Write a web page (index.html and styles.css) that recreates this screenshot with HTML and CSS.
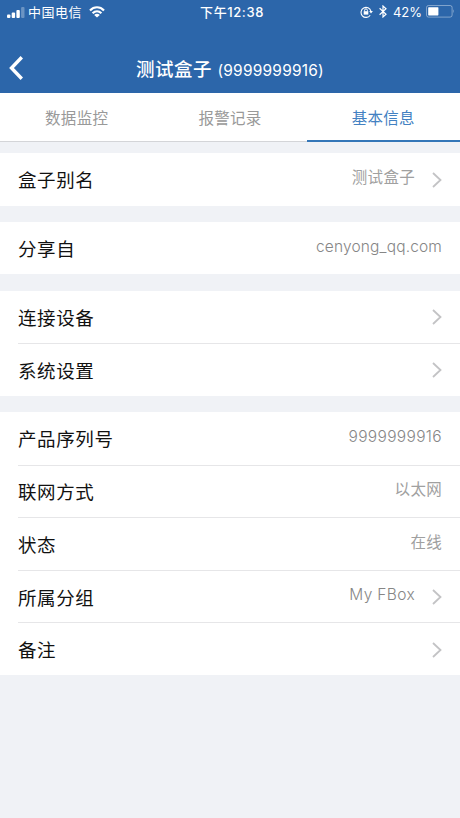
FILE: index.html
```
<!DOCTYPE html>
<html lang="zh-CN">
<head>
<meta charset="utf-8">
<title>测试盒子</title>
<link rel="stylesheet" href="styles.css">
</head>
<body>
<header class="header">
  <div class="status">
    <div class="status-left">
      <svg class="signal" width="18" height="12" viewBox="0 0 18 12" fill="#fff"><rect x="0" y="7.4" width="3.4" height="3.6" rx="1"/><rect x="4.7" y="5.4" width="3.4" height="5.6" rx="1"/><rect x="9.4" y="3" width="3.4" height="8" rx="1"/><rect x="14.1" y="0" width="3.4" height="11" rx="1" opacity=".3"/></svg>
      <span class="carrier">中国电信</span>
      <svg class="wifi" width="16" height="12" viewBox="0 0 16 12" fill="none" stroke="#fff" stroke-width="2.2"><path d="M1 4.4C5 .2 11 .2 15 4.4M3.6 7.3c2.6-2.6 6.2-2.6 8.8 0"/><path d="M8 11.6 5.2 8.9c1.6-1.4 4-1.4 5.6 0Z" fill="#fff" stroke="none"/></svg>
    </div>
    <span class="clock">下午12:38</span>
    <div class="status-right">
      <svg class="lock" width="13" height="12" viewBox="0 0 13 12" fill="none" stroke="#fff"><path d="M10.2 9.2A5 5 0 1 1 10.9 5.2" stroke-width="1.1"/><path d="M9.2 5h3.7L11 7.5Z" fill="#fff" stroke="none"/><rect x="3.7" y="5.2" width="4.6" height="3.4" fill="#fff" stroke="none"/><path d="M4.6 5.5V4.3a1.4 1.4 0 0 1 2.8 0v1.2"/></svg>
      <svg class="bluetooth" width="8" height="13" viewBox="0 0 8 13" fill="none" stroke="#fff" stroke-width="1.2"><path d="m.6 3.3 6.4 6-3 2.7V1l3 2.7-6.4 6"/></svg>
      <span class="percent">42%</span>
      <svg class="battery" width="29" height="13" viewBox="0 0 29 13"><rect x=".5" y=".5" width="25.6" height="11.6" rx="2" fill="none" stroke="#fff" opacity=".4"/><rect x="2.2" y="2.2" width="10.2" height="8.2" rx=".6" fill="#fff"/><path d="M27.4 4.3q1.5 2 0 4Z" fill="#fff" opacity=".5"/></svg>
    </div>
  </div>
  <div class="navbar">
    <svg class="back" width="14" height="24" viewBox="0 0 14 24" fill="none" stroke="#fff" stroke-width="3.4"><path d="M12.8 1.3 2.5 12l10.3 10.7"/></svg>
    <h1 class="title">测试盒子 <span class="serial">(9999999916)</span></h1>
  </div>
</header>
<nav class="tabs">
  <a class="tab">数据监控</a>
  <a class="tab">报警记录</a>
  <a class="tab active">基本信息</a>
</nav>
<main class="groups">
  <section class="group">
    <div class="row"><span class="label">盒子别名</span><span class="value">测试盒子</span><svg class="chevron" viewBox="0 0 10 16"><path d="m1 1 7.5 7L1 15"/></svg></div>
  </section>
  <section class="group">
    <div class="row"><span class="label">分享自</span><span class="value email">cenyong_qq.com</span></div>
  </section>
  <section class="group">
    <div class="row"><span class="label">连接设备</span><svg class="chevron" viewBox="0 0 10 16"><path d="m1 1 7.5 7L1 15"/></svg></div>
    <div class="row"><span class="label">系统设置</span><svg class="chevron" viewBox="0 0 10 16"><path d="m1 1 7.5 7L1 15"/></svg></div>
  </section>
  <section class="group">
    <div class="row"><span class="label">产品序列号</span><span class="value number">9999999916</span></div>
    <div class="row"><span class="label">联网方式</span><span class="value">以太网</span></div>
    <div class="row"><span class="label">状态</span><span class="value">在线</span></div>
    <div class="row"><span class="label">所属分组</span><span class="value number">My FBox</span><svg class="chevron" viewBox="0 0 10 16"><path d="m1 1 7.5 7L1 15"/></svg></div>
    <div class="row"><span class="label">备注</span><svg class="chevron" viewBox="0 0 10 16"><path d="m1 1 7.5 7L1 15"/></svg></div>
  </section>
</main>
</body>
</html>
```
FILE: styles.css
```
* { box-sizing: border-box; }
body {
  margin: 0;
  min-height: 818px;
  background: #f0f2f6;
  color: #111;
  font-family: Inter, "Noto Sans CJK SC", sans-serif;
}
svg { display: block; flex: none; }
.header {
  height: 93.4px;
  background: #2c66aa;
  color: #fff;
}
.status {
  display: grid;
  grid-template-columns: 1fr auto 1fr;
  align-items: center;
  height: 23px;
  padding: 0 6px 0 7px;
  line-height: 24px;
}
.status-left, .status-right { display: flex; align-items: center; }
.status-right { justify-content: flex-end; }
.signal { margin-top: 1px; }
.carrier { margin-left: 3px; font-size: 13px; letter-spacing: .5px; }
.wifi { margin-left: 7px; }
.clock { padding-left: 3px; font-size: 13px; font-weight: 500; letter-spacing: .6px; }
.percent { margin: 0 4px 0 6px; font-size: 13px; letter-spacing: 0; }
.lock { margin-top: -1px; }
.bluetooth { margin-left: 6px; }
.percent, .battery, .bluetooth { position: relative; top: -.5px; }
.battery { margin-right: -1px; }
.navbar {
  display: grid;
  grid-template-columns: 30px 1fr 30px;
  align-items: center;
  height: 70px;
  padding-top: 20px;
}
.back { margin-left: 9px; }
.title {
  margin: 0;
  padding-top: 3px;
  text-align: center;
  font-size: 18.5px;
  font-weight: 500;
  line-height: 30px;
  letter-spacing: .5px;
  white-space: nowrap;
}
.serial { font-size: 15.5px; font-weight: 400; letter-spacing: .2px; }
.tabs {
  display: grid;
  grid-template-columns: repeat(3, 1fr);
  height: 49px;
  background: #fff;
}
.tab {
  height: 49px;
  padding-top: 5px;
  border-bottom: 1px solid #d4d5d8;
  color: #999;
  text-align: center;
  font-size: 15.5px;
  line-height: 42px;
  letter-spacing: .3px;
}
.tab.active { border-bottom: 2px solid #3577b8; color: #4381c2; }
.groups {
  display: grid;
  gap: 16.2px;
  padding-top: 10.6px;
}
.group { background: #fff; }
.row {
  display: flex;
  align-items: center;
  height: 52.6px;
  margin-left: 18px;
  padding-right: 18px;
}
.row + .row { border-top: 1px solid #e6e6e8; }
.label {
  flex: 1;
  padding-top: 2px;
  font-size: 18.5px;
  line-height: 28px;
  letter-spacing: .6px;
}
.value {
  margin-bottom: 2px;
  color: #a0a0a0;
  font-size: 15.5px;
  line-height: 24px;
  letter-spacing: .3px;
}
.email, .number { margin-bottom: 3px; color: #868686; font-weight: 300; }
.email { letter-spacing: .15px; }
.number { letter-spacing: .35px; }
.chevron {
  width: 10px;
  height: 16px;
  margin-top: 1px;
  margin-left: 17px;
  fill: none;
  stroke: #c3c3c5;
  stroke-width: 1.8;
}
```
